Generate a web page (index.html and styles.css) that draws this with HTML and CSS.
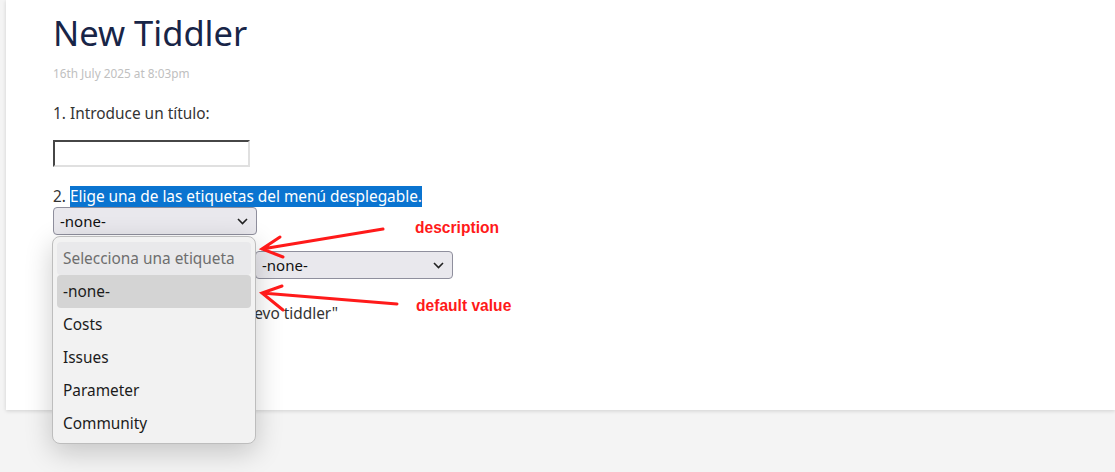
FILE: index.html
```html
<!DOCTYPE html>
<html lang="es">
<head>
  <meta charset="UTF-8" />
  <title>New Tiddler</title>
  <link rel="stylesheet" href="styles.css">
</head>
<body>
  <div class="tiddler">
    <h1 class="title">New Tiddler</h1>
    <div class="subtitle">16th July 2025 at 8:03pm</div>

    <p class="step">1. Introduce un título:</p>
    <input type="text" class="title-input" />

    <p class="step step-two">2. <span class="selected">Elige una de las etiquetas del menú desplegable.</span></p>
    <div class="select-wrap">
      <div class="select select-small">
        <span>-none-</span>
        <svg width="11" height="7" viewBox="0 0 11 7"><path d="M1 1l4.5 4.5L10 1" fill="none" stroke="#222" stroke-width="1.6"/></svg>
      </div>

      <div class="dropdown">
        <div class="option option-desc">Selecciona una etiqueta</div>
        <div class="option option-active">-none-</div>
        <div class="option">Costs</div>
        <div class="option">Issues</div>
        <div class="option">Parameter</div>
        <div class="option">Community</div>
      </div>
    </div>

    <div class="row">
      <div class="select select-wide">
        <span>-none-</span>
        <svg width="11" height="7" viewBox="0 0 11 7"><path d="M1 1l4.5 4.5L10 1" fill="none" stroke="#222" stroke-width="1.6"/></svg>
      </div>
    </div>

    <p class="step step-three">3. Pulsa el botón - "Crear nuevo tiddler"</p>
  </div>

  <!-- annotations drawn on top of the screenshot -->
  <div class="notes">
    <svg class="arrows" width="1115" height="472">
      <g fill="none" stroke="#ff1a1a" stroke-width="3" stroke-linecap="round">
        <path d="M383 229 L262 249 M280 237 L262 249 L283 257"/>
        <path d="M397 304 L262 293 M282 286 L262 293 L283 310"/>
      </g>
    </svg>
    <span class="note note-desc">description</span>
    <span class="note note-default">default value</span>
  </div>
</body>
</html>
```

FILE: styles.css
```css
/* Base */
* {
  box-sizing: border-box;
  margin: 0;
  padding: 0;
}

body {
  font-family: 'Noto Sans', 'Open Sans', sans-serif;
  background-color: #f4f4f4;
  color: #333;
  width: 1115px;
  height: 472px;
  overflow: hidden;
  position: relative;
}

/* Tiddler card */
.tiddler {
  margin-left: 6px;
  height: 410px;
  background: #fff;
  padding: 11px 47px 0;
  box-shadow: 0 1px 4px rgba(0, 0, 0, 0.15);
}

.title {
  font-size: 34.5px;
  font-weight: 400;
  line-height: 44px;
  color: #182547;
}

.subtitle {
  margin-top: 8px;
  font-size: 11.8px;
  line-height: 20px;
  color: #c0c0c0;
}

.step {
  font-size: 15.4px;
  line-height: 20px;
  margin-top: 21px;
}

.title-input {
  display: block;
  margin-top: 16px;
  width: 197px;
  height: 27px;
  border: 2px inset #e0e0e0;
  border-top-color: #9a9a9a;
  border-left-color: #9a9a9a;
  background: #fff;
}

.step-two {
  margin-top: 20px;
}

.selected {
  background: #0a74d0;
  color: #fff;
}

/* Selects */
.select-wrap {
  position: relative;
  width: 204px;
}

.select {
  height: 28px;
  background: #e9e8ed;
  border: 1px solid #8f8f9d;
  border-radius: 4px;
  display: flex;
  align-items: center;
  justify-content: space-between;
  padding: 0 8px 0 6px;
  font-size: 15px;
  color: #111;
}

.select-small {
  width: 204px;
}

.select-wide {
  width: 198px;
  margin-left: 202px;
}

/* Opened dropdown list */
.dropdown {
  position: absolute;
  top: 29px;
  left: -1px;
  width: 204px;
  background: #f2f2f2;
  border: 1px solid #bdbdbd;
  border-radius: 8px;
  padding: 5px 4px 3px;
  box-shadow: 0 8px 28px rgba(0, 0, 0, 0.2);
  z-index: 2;
}

.option {
  height: 33px;
  line-height: 33px;
  padding-left: 6px;
  font-size: 15.4px;
  color: #1b1b1b;
  border-radius: 4px;
}

.option-desc {
  background: #e9e9eb;
  color: #6e6e6e;
}

.option-active {
  background: #d4d4d4;
}

.row {
  display: flex;
  align-items: center;
  margin-top: 16px;
}

.step-three {
  margin-top: 25px;
}

/* Red annotations */
.notes {
  position: absolute;
  inset: 0;
  pointer-events: none;
  z-index: 3;
}

.arrows {
  position: absolute;
  left: 0;
  top: 0;
}

.note {
  position: absolute;
  font-family: 'Liberation Sans', Arial, sans-serif;
  font-weight: 700;
  font-size: 15.6px;
  color: #ff1a1a;
}

.note-desc {
  left: 415px;
  top: 219px;
}

.note-default {
  left: 416px;
  top: 297px;
}
```
